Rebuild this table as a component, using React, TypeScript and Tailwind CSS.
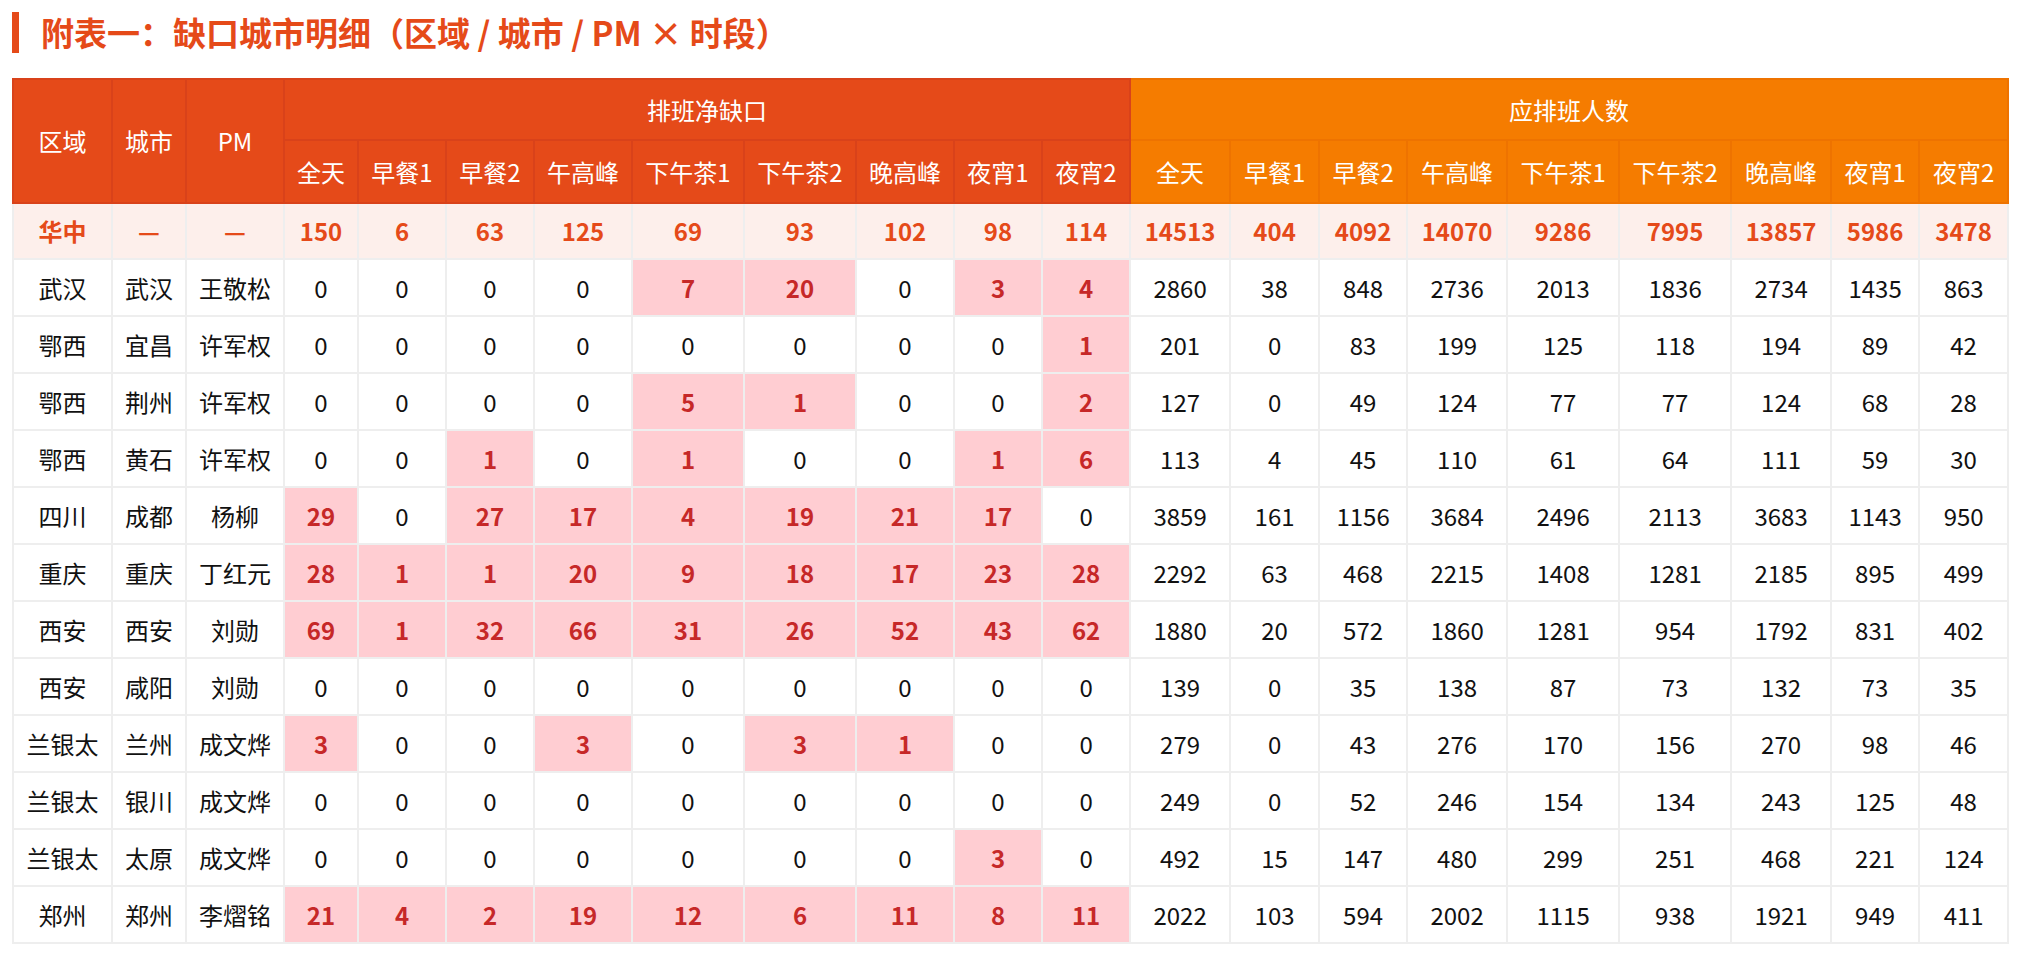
import React from "react"

const slots = ["全天", "早餐1", "早餐2", "午高峰", "下午茶1", "下午茶2", "晚高峰", "夜宵1", "夜宵2"]

const colWidths = [
  "w-[99px]", "w-[74px]", "w-[98px]",
  "w-[74px]", "w-[88px]", "w-[88px]", "w-[98px]", "w-[112px]", "w-[112px]", "w-[98px]", "w-[88px]", "w-[88px]",
  "w-[100px]", "w-[89px]", "w-[88px]", "w-[100px]", "w-[112px]", "w-[112px]", "w-[100px]", "w-[88px]", "w-[89px]",
]

type Row = { region: string; city: string; pm: string; gap: number[]; need: number[] }

const total: Row = {
  region: "华中",
  city: "—",
  pm: "—",
  gap: [150, 6, 63, 125, 69, 93, 102, 98, 114],
  need: [14513, 404, 4092, 14070, 9286, 7995, 13857, 5986, 3478],
}

const rows: Row[] = [
  { region: "武汉", city: "武汉", pm: "王敬松", gap: [0, 0, 0, 0, 7, 20, 0, 3, 4], need: [2860, 38, 848, 2736, 2013, 1836, 2734, 1435, 863] },
  { region: "鄂西", city: "宜昌", pm: "许军权", gap: [0, 0, 0, 0, 0, 0, 0, 0, 1], need: [201, 0, 83, 199, 125, 118, 194, 89, 42] },
  { region: "鄂西", city: "荆州", pm: "许军权", gap: [0, 0, 0, 0, 5, 1, 0, 0, 2], need: [127, 0, 49, 124, 77, 77, 124, 68, 28] },
  { region: "鄂西", city: "黄石", pm: "许军权", gap: [0, 0, 1, 0, 1, 0, 0, 1, 6], need: [113, 4, 45, 110, 61, 64, 111, 59, 30] },
  { region: "四川", city: "成都", pm: "杨柳", gap: [29, 0, 27, 17, 4, 19, 21, 17, 0], need: [3859, 161, 1156, 3684, 2496, 2113, 3683, 1143, 950] },
  { region: "重庆", city: "重庆", pm: "丁红元", gap: [28, 1, 1, 20, 9, 18, 17, 23, 28], need: [2292, 63, 468, 2215, 1408, 1281, 2185, 895, 499] },
  { region: "西安", city: "西安", pm: "刘勋", gap: [69, 1, 32, 66, 31, 26, 52, 43, 62], need: [1880, 20, 572, 1860, 1281, 954, 1792, 831, 402] },
  { region: "西安", city: "咸阳", pm: "刘勋", gap: [0, 0, 0, 0, 0, 0, 0, 0, 0], need: [139, 0, 35, 138, 87, 73, 132, 73, 35] },
  { region: "兰银太", city: "兰州", pm: "成文烨", gap: [3, 0, 0, 3, 0, 3, 1, 0, 0], need: [279, 0, 43, 276, 170, 156, 270, 98, 46] },
  { region: "兰银太", city: "银川", pm: "成文烨", gap: [0, 0, 0, 0, 0, 0, 0, 0, 0], need: [249, 0, 52, 246, 154, 134, 243, 125, 48] },
  { region: "兰银太", city: "太原", pm: "成文烨", gap: [0, 0, 0, 0, 0, 0, 0, 3, 0], need: [492, 15, 147, 480, 299, 251, 468, 221, 124] },
  { region: "郑州", city: "郑州", pm: "李熠铭", gap: [21, 4, 2, 19, 12, 6, 11, 8, 11], need: [2022, 103, 594, 2002, 1115, 938, 1921, 949, 411] },
]

const td = "border-2 border-[#eeeeee] text-center p-0"
const thRed = "border-2 border-[#d9421a] bg-[#e54a19] font-normal text-white text-center p-0"
const thOrange = "border-2 border-[#ee7300] bg-[#f57c00] font-normal text-white text-center p-0"

export default function App() {
  return (
    <div
      className="min-h-[955px] bg-white px-3 pt-3"
      style={{ fontFamily: '"Noto Sans CJK SC", "Noto Sans", sans-serif' }}
    >
      <h1 className="flex h-[41px] items-center border-l-[7px] border-[#e54a19] pl-[22px] text-[33px] font-bold text-[#e54a19]">
        附表一：缺口城市明细（区域 / 城市 / PM × 时段）
      </h1>

      <table className="mt-[25px] w-full table-fixed border-collapse text-[24px]">
        <colgroup>
          {colWidths.map((w, i) => (
            <col key={i} className={w} />
          ))}
        </colgroup>
        <thead>
          <tr className="h-[61px]">
            <th rowSpan={2} className={thRed}>区域</th>
            <th rowSpan={2} className={thRed}>城市</th>
            <th rowSpan={2} className={thRed}>PM</th>
            <th colSpan={9} className={thRed}>排班净缺口</th>
            <th colSpan={9} className={thOrange}>应排班人数</th>
          </tr>
          <tr className="h-[63px]">
            {slots.map((s) => (
              <th key={"g" + s} className={thRed}>{s}</th>
            ))}
            {slots.map((s) => (
              <th key={"n" + s} className={thOrange}>{s}</th>
            ))}
          </tr>
        </thead>
        <tbody>
          <tr className="h-[56px] bg-[#fdefeb] font-bold text-[#e54a19]">
            <td className={td}>{total.region}</td>
            <td className={td}>{total.city}</td>
            <td className={td}>{total.pm}</td>
            {total.gap.map((v, i) => (
              <td key={"tg" + i} className={td}>{v}</td>
            ))}
            {total.need.map((v, i) => (
              <td key={"tn" + i} className={td}>{v}</td>
            ))}
          </tr>
          {rows.map((r, ri) => (
            <tr key={ri} className="h-[57px] text-[#111111]">
              <td className={td}>{r.region}</td>
              <td className={td}>{r.city}</td>
              <td className={td}>{r.pm}</td>
              {r.gap.map((v, i) => (
                <td
                  key={"g" + i}
                  className={v > 0 ? td + " bg-[#ffcdd2] font-bold text-[#c62828]" : td}
                >
                  {v}
                </td>
              ))}
              {r.need.map((v, i) => (
                <td key={"n" + i} className={td}>{v}</td>
              ))}
            </tr>
          ))}
        </tbody>
      </table>
    </div>
  )
}
